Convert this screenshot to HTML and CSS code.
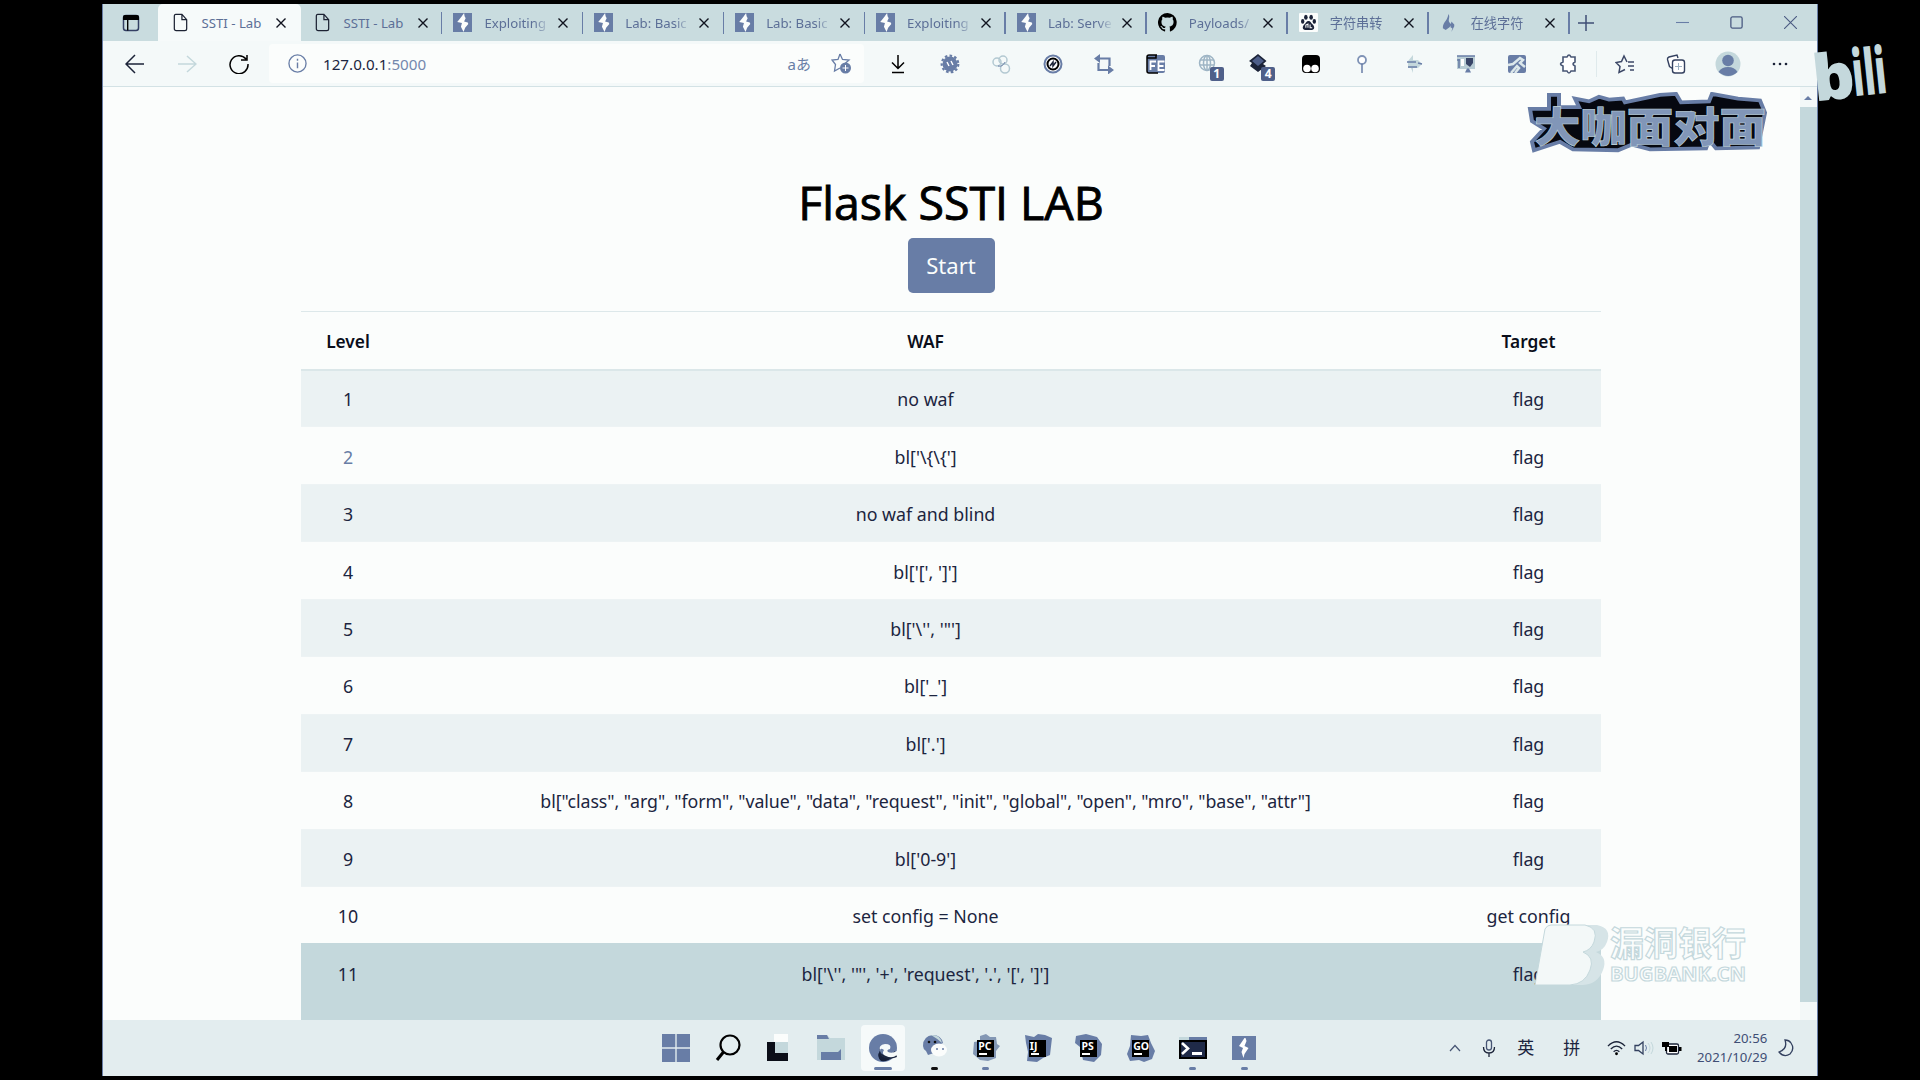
FILE: index.html
```html
<!DOCTYPE html>
<html lang="zh">
<head>
<meta charset="utf-8">
<title>SSTI - Lab</title>
<link rel="stylesheet" href="styles.css">
</head>
<body>
<svg class="defs" aria-hidden="true">
  <symbol id="close" viewBox="0 0 12 12"><path d="M1.500 1.500l9 9m0-9l-9 9" fill="none" stroke="#10131f" stroke-width="1.400"/></symbol>
  <symbol id="page" viewBox="0 0 16 20"><path d="M3 1.500h6.500l5 5.500v9.500q0 2-2 2h-9q-2 0-2-2v-13q0-2 1.500-2zM9.500 1.500v5.500h5" fill="none" stroke="#1c2233" stroke-width="1.300"/></symbol>
  <symbol id="bolt" viewBox="0 0 18 18"><path d="M0 0h18v18H0z" fill="#687da6"/><path d="M10.500 0L8 3.500l-4 5 4.500 1-1 3.500 2.500 5 1.500-4 3-3.500-.5-1.500-3.500-1L12 5l-1-2z" fill="#fbfdfc"/></symbol>
</svg>
<div class="window">
  <div class="tabs">
    <div class="workspace"><svg width="18" height="18" viewBox="0 0 18 18"><rect x="1.500" y="1.500" width="15" height="15" rx="2.500" fill="none" stroke="#344064" stroke-width="1.500"/><path d="M1 6V3q0-2 2-2h12q2 0 2 2v3zM5 6h1.400v10.500H5z" fill="#000"/></svg></div>
    <div class="tab active"><svg class="fav"><use href="#page"/></svg><span>SSTI - Lab</span><svg class="x"><use href="#close"/></svg></div>
    <div class="tab"><svg class="fav"><use href="#page"/></svg><span>SSTI - Lab</span><svg class="x"><use href="#close"/></svg></div>
    <div class="tab"><svg class="fav"><use href="#bolt"/></svg><span>Exploiting</span><svg class="x"><use href="#close"/></svg></div>
    <div class="tab"><svg class="fav"><use href="#bolt"/></svg><span>Lab: Basic</span><svg class="x"><use href="#close"/></svg></div>
    <div class="tab"><svg class="fav"><use href="#bolt"/></svg><span>Lab: Basic</span><svg class="x"><use href="#close"/></svg></div>
    <div class="tab"><svg class="fav"><use href="#bolt"/></svg><span>Exploiting</span><svg class="x"><use href="#close"/></svg></div>
    <div class="tab"><svg class="fav"><use href="#bolt"/></svg><span>Lab: Serve</span><svg class="x"><use href="#close"/></svg></div>
    <div class="tab"><svg class="fav" viewBox="0 0 16 16"><path d="M8 0a8 8 0 0 0-2.500 15.600c.4.100.5-.2.500-.4v-1.500c-2.200.5-2.700-1-2.700-1-.4-.9-.9-1.200-.9-1.200-.7-.5.100-.5.100-.5.800.1 1.200.8 1.200.8.7 1.300 1.900.9 2.300.7.1-.5.300-.9.500-1.100-1.800-.2-3.600-.9-3.600-4 0-.9.300-1.600.8-2.100-.1-.2-.4-1 .1-2.100 0 0 .7-.2 2.200.8a7.500 7.500 0 0 1 4 0c1.500-1 2.200-.8 2.200-.8.500 1.100.2 1.900.1 2.100.5.500.8 1.200.8 2.100 0 3.100-1.900 3.800-3.600 4 .3.200.5.700.5 1.500v2.200c0 .2.100.500.500.400A8 8 0 0 0 8 0z" fill="#000"/></svg><span>Payloads/</span><svg class="x"><use href="#close"/></svg></div>
    <div class="tab"><svg class="fav" viewBox="0 0 18 18"><rect width="18" height="18" rx="1" fill="#fbfdfc"/><g fill="#1b2338"><ellipse cx="6.500" cy="4" rx="1.700" ry="2.400"/><ellipse cx="11.500" cy="4" rx="1.700" ry="2.400"/><ellipse cx="3.500" cy="8" rx="1.600" ry="2.200"/><ellipse cx="14.500" cy="8" rx="1.600" ry="2.200"/><path d="M9 7.500c2 0 2.500 2 4 3.500 2 2 2 5-1 5H6c-3 0-3-3-1-5 1.500-1.500 2-3.500 4-3.500z"/></g><path d="M6.500 14v-2.500l2-1v3.500m2-3v3h2" fill="none" stroke="#fbfdfc"/></svg><span>字符串转</span><svg class="x"><use href="#close"/></svg></div>
    <div class="tab"><svg class="fav" viewBox="0 0 18 20"><path d="M8 1c2 4-1 6 1 9l2 2-2 3-4 3-3-2c0-7 4-6 6-15zM11 9l3 3v2l-3 6 1-4-2-1z" fill="#687da6"/></svg><span>在线字符</span><svg class="x"><use href="#close"/></svg></div>
    <div class="newtab"><svg width="16" height="16" viewBox="0 0 16 16"><path d="M8 0v16M0 8h16" stroke="#3f4e75" stroke-width="1.500"/></svg></div>
    <div class="controls">
      <svg viewBox="0 0 12 12"><path d="M0 6h12" stroke="#687da6"/></svg>
      <svg viewBox="0 0 12 12"><rect x=".8" y=".8" width="10.400" height="10.400" rx="1.500" fill="none" stroke="#4b5b82" stroke-width="1.200"/></svg>
      <svg viewBox="0 0 12 12"><path d="M0 0l12 12M12 0L0 12" stroke="#4b5b82"/></svg>
    </div>
  </div>

  <div class="toolbar">
    <div class="nav">
      <svg viewBox="0 0 20 20"><path d="M10 1L1 10l9 9M1 10h18" fill="none" stroke="#1b2338" stroke-width="1.500"/></svg>
      <svg viewBox="0 0 20 20"><path d="M10 2l9 8-9 8M1 10h18" fill="none" stroke="#c4d8dc" stroke-width="1.500"/></svg>
      <svg viewBox="0 0 20 20"><path d="M17 5a9 9 0 1 0 2 5M18 1v5h-6" fill="none" stroke="#000" stroke-width="1.500"/></svg>
    </div>
    <div class="address">
      <svg width="19" height="19" viewBox="0 0 20 20"><circle cx="10" cy="10" r="9" fill="none" stroke="#687da6" stroke-width="1.400"/><path d="M10 5v2m0 2v6" stroke="#687da6" stroke-width="1.500"/></svg>
      <p class="url">127.0.0.1<span>:5000</span></p>
      <span class="translate">aあ</span>
      <svg width="21" height="23" viewBox="0 0 21 21"><path d="M9 1l2.500 5.500 6.500.5-5 4.500M9 15l-5.500 3 1-6.500L1 7l6-.5L9 1" fill="none" stroke="#687da6" stroke-width="1.300"/><circle cx="14.500" cy="15" r="5.500" fill="#687da6"/><path d="M14.500 12v6m-3-3h6" stroke="#fff"/></svg>
    </div>
    <div class="exts">
      <svg viewBox="0 0 20 20"><path d="M10 1v13M4 8.500l6 6 6-6M4 18.500h12" fill="none" stroke="#000" stroke-width="1.500"/></svg>
      <svg viewBox="0 0 20 20"><circle cx="10" cy="10" r="7.500" fill="#687da6"/><circle cx="10" cy="10" r="8.300" fill="none" stroke="#687da6" stroke-width="2.200" stroke-dasharray="2.600 2.200"/><path d="M7 8l2 4m2-5l2 4" stroke="#fff" stroke-width="1.400"/></svg>
      <svg viewBox="0 0 20 20"><g fill="none" stroke="#b3c9d2" stroke-width="1.500"><circle cx="6" cy="8" r="4"/><circle cx="12" cy="6" r="4"/><circle cx="14" cy="14.500" r="4.500"/></g><path d="M7 12c4 1 6-2 7-4" fill="none" stroke="#687da6"/></svg>
      <svg viewBox="0 0 20 20"><circle cx="10" cy="10" r="8.500" fill="#fff" stroke="#687da6" stroke-width="2"/><circle cx="10" cy="10" r="5.500" fill="#fff" stroke="#000" stroke-width="2"/><path d="M7 12l3-4v4l3-4" fill="none" stroke="#1b2338" stroke-width="1.500"/></svg>
      <svg viewBox="0 0 20 20"><path d="M4.500 9v7H15M4 4.500h11.500V12" fill="none" stroke="#687da6" stroke-width="2.200"/><path d="M6 0v9L0 4.500zM14 11.500v9l6-4.500z" fill="#687da6"/></svg>
      <svg viewBox="0 0 20 20"><rect x="1" y="1" width="18" height="18" rx="2" fill="#687da6"/><path d="M11 1H3q-2 0-2 2v14q0 2 2 2h9M1 4h9V1" fill="none" stroke="#000" stroke-width="1.500"/><path d="M4.500 16V7.500H10M5 12h4M18.500 7.500h-6V16h6m-6-4h5" fill="none" stroke="#fff" stroke-width="1.800"/></svg>
      <div class="ext"><svg viewBox="0 0 20 20"><g fill="none" stroke="#9eb5c5" stroke-width="1.500"><circle cx="9" cy="9" r="7.500"/><ellipse cx="9" cy="9" rx="3.500" ry="7.500"/><path d="M2 6h14M2 11h14M9 1v16"/></g></svg><b class="badge">1</b></div>
      <div class="ext"><svg viewBox="0 0 20 20"><path d="M9 0l8.500 7L14 10l3 2-8 6-8-6 2-3-3-2z" fill="#1b2338"/><path d="M9 2l6 5-6 5-6-5z" fill="#4d5e89"/></svg><b class="badge">4</b></div>
      <svg viewBox="0 0 20 20"><rect x="1" y="1" width="18" height="18" rx="4" fill="#000"/><circle cx="6" cy="14.500" r="3.800" fill="#fff"/><circle cx="14" cy="14.500" r="3.800" fill="#fff"/></svg>
      <svg viewBox="0 0 20 20"><circle cx="10" cy="6" r="4" fill="#fff" stroke="#7f93b6" stroke-width="1.800"/><path d="M10 10v9" stroke="#687da6" stroke-width="1.500"/></svg>
      <svg viewBox="0 0 20 20"><path d="M4 7l5-6v5h5l4 4-4 4H9v5l-2-5H4z" fill="#c4d8dc"/><path d="M3 8h9M4 13h9M14 9l4 1" stroke="#687da6" stroke-width="1.300"/></svg>
      <svg viewBox="0 0 20 20"><path d="M1 2h18v13H1z" fill="#b9cdd5"/><path d="M1 2h18M1 6h3M3 5v9" stroke="#687da6" stroke-width="1.600"/><path d="M9 18.500h6l-2-4h-2z" fill="#687da6"/><path d="M10 4h7v5l-3 4-4-3z" fill="#394668"/><path d="M5 5h3v7H5z" fill="#fff"/></svg>
      <svg viewBox="0 0 20 20"><rect x="1" y="1" width="18" height="18" rx="2" fill="#687da6"/><path d="M1 11l5-1 7-6 3 2-3 3 5 4M4 19l6-7 2 2-4 5" fill="none" stroke="#dce8eb" stroke-width="2.500"/></svg>
      <svg viewBox="0 0 20 20"><path d="M8 3q2-4 4 0h4v5q-4 2 0 4v5h-4q-2 4-4 0H4v-5q-5-2 0-4V3z" fill="#fff" stroke="#475574" stroke-width="1.600"/></svg>
    </div>
    <div class="exts browser">
      <svg viewBox="0 0 20 20"><path d="M12 8l-3-6-2.500 5.500-5.500 1 4 4-1 6 6-3M13 8h6M13 12h6M15 16h4" fill="none" stroke="#3c4867" stroke-width="1.500"/></svg>
      <svg viewBox="0 0 20 20"><g fill="#fff" stroke="#33405f" stroke-width="1.400"><path d="M12 4l-1-3-8 2q-2 1-1.500 2.500l2 7 3 2"/><rect x="6.500" y="6" width="12" height="13" rx="2.500"/></g><path d="M12.500 9v7m-3.500-3.500h7" stroke="#9bb0c1"/></svg>
      <svg class="person" viewBox="0 0 26 26"><circle cx="13" cy="13" r="12.500" fill="#c4d8dc"/><circle cx="13" cy="9.500" r="5.800" fill="#687da6"/><path d="M3.500 21q3-5 9.500-5t9.500 5q-9 8-19 0z" fill="#687da6"/></svg>
      <svg viewBox="0 0 20 20"><g fill="#1b2338"><circle cx="4" cy="10" r="1.300"/><circle cx="10" cy="10" r="1.300"/><circle cx="16" cy="10" r="1.300"/></g></svg>
    </div>
  </div>

  <div class="view">
    <main>
      <h1>Flask SSTI LAB</h1>
      <button>Start</button>
      <table>
        <thead><tr><th class="c1">Level</th><th>WAF</th><th class="c3">Target</th></tr></thead>
        <tbody>
          <tr><td>1</td><td>no waf</td><td>flag</td></tr>
          <tr><td class="visited">2</td><td>bl['\{\{']</td><td>flag</td></tr>
          <tr><td>3</td><td>no waf and blind</td><td>flag</td></tr>
          <tr><td>4</td><td>bl['[', ']']</td><td>flag</td></tr>
          <tr><td>5</td><td>bl['\'', '"']</td><td>flag</td></tr>
          <tr><td>6</td><td>bl['_']</td><td>flag</td></tr>
          <tr><td>7</td><td>bl['.']</td><td>flag</td></tr>
          <tr><td>8</td><td class="long">bl["class", "arg", "form", "value", "data", "request", "init", "global", "open", "mro", "base", "attr"]</td><td>flag</td></tr>
          <tr><td>9</td><td>bl['0-9']</td><td>flag</td></tr>
          <tr><td>10</td><td>set config = None</td><td>get config</td></tr>
          <tr class="hover"><td>11</td><td>bl['\'', '"', '+', 'request', '.', '[', ']']</td><td>flag</td></tr>
        </tbody>
      </table>
    </main>
    <div class="scroll"><i></i></div>
  </div>

  <footer class="taskbar">
    <div class="apps">
      <div class="app"><svg viewBox="0 0 28 28"><path d="M0 0h13.300v13.300H0zM14.700 0H28v13.300H14.700zM0 14.700h13.300V28H0zM14.700 14.700H28V28H14.700z" fill="#687da6"/></svg></div>
      <div class="app"><svg viewBox="0 0 28 28"><circle cx="16" cy="11" r="9.500" fill="none" stroke="#000" stroke-width="2.200"/><path d="M9.500 18L3 26" stroke="#000" stroke-width="3"/></svg></div>
      <div class="app"><svg viewBox="0 0 28 28"><path d="M9 0h14v9H9z" fill="#fbfdfc"/><path d="M10 8h13v12H10z" fill="#c4d8dc"/><path d="M2 8h8v11h13v8H2z" fill="#0b0e18"/></svg></div>
      <div class="app"><svg viewBox="0 0 28 28"><path d="M0 1h10l3 3h15v22H0z" fill="#c4d8dc"/><path d="M0 1h10l2 4H0zM4 18h17l3-3v11H4z" fill="#687da6"/></svg></div>
      <div class="app on"><svg viewBox="0 0 28 28"><circle cx="14" cy="14" r="14" fill="#687da6"/><path d="M11 17q1 9 13 6-5 5-12 4-5-5-1-10z" fill="#16203a"/><path d="M12 12q-3 5 1 8 6 4 13-3l2 6-3 1q-7 2-11-1-6-5-2-11z" fill="#1b2740"/><path d="M11 17q-2-6 5-7 7 0 5 5-4 1-2 3 4 2 9-1v4q-5 4-11 1-5-2-2-6-4-3-4 1z" fill="#f6fafa"/></svg><i></i></div>
      <div class="app"><svg viewBox="0 0 28 28"><path d="M3 12Q3 2 13 1q8 0 10 8l-8 4-1 6-6 2-2-4q-3-2-3-5z" fill="#687da6"/><ellipse cx="19" cy="16" rx="8" ry="6.500" fill="#fbfdfc"/><path d="M11 1q9-1 11 8-4-4-11-8z" fill="#c4d8dc"/><g fill="#111"><circle cx="9" cy="8" r="1.300"/><circle cx="15" cy="8" r="1.300"/></g><g fill="#687da6"><circle cx="17" cy="15" r="1"/><circle cx="23" cy="15" r="1"/></g></svg><i class="dark"></i></div>
      <div class="app jb"><svg viewBox="0 0 28 28"><path d="M8 2l6-2 4 3 6 0 1 7 3 2-4 5 0 7-8 3-8-1-7-6 1-12 6-1z" fill="#8397b4"/><path d="M5 6h17v17H5z" fill="#000"/><path d="M7 19h8v2H7z" fill="#fff"/></svg><b>PC</b><i></i></div>
      <div class="app jb"><svg viewBox="0 0 28 28"><path d="M1 1l9 2 4-3 7 1 7 3-2 17-7 3-6 4-10-1 1-9-2-9z" fill="#687da6"/><path d="M5 6h17v17H5z" fill="#000"/><path d="M7 19h8v2H7z" fill="#fff"/></svg><b>IJ</b></div>
      <div class="app jb"><svg viewBox="0 0 28 28"><path d="M1 2l10-2 11 3 5 7-1 11-7 7-11-2-3-13-5-4z" fill="#687da6"/><path d="M5 6h17v17H5z" fill="#000"/><path d="M7 19h8v2H7z" fill="#fff"/></svg><b>PS</b></div>
      <div class="app jb"><svg viewBox="0 0 28 28"><path d="M4 1l10 1 7-1 3 8 4 8-3 8-8 3-5-2-9 1-3-7 3-8z" fill="#687da6"/><path d="M5 6h17v17H5z" fill="#000"/><path d="M7 19h8v2H7z" fill="#fff"/></svg><b>GO</b></div>
      <div class="app"><svg viewBox="0 0 28 28"><path d="M0 3h28v22H0z" fill="#000"/><path d="M0 3h10v3H0z" fill="#c4d8dc"/><path d="M10 3h18v3H10z" fill="#687da6"/><path d="M2 8h24v15H2z" fill="#1f2a48"/><path d="M3 9l6 5.500L3 20" fill="none" stroke="#fff" stroke-width="2.600"/><path d="M13 18h10v3H13z" fill="#fff"/></svg><i></i></div>
      <div class="app"><svg viewBox="0 0 28 28"><path d="M2 2h24v24H2z" fill="#687da6"/><path d="M14.500 4L9 12l4 2-1.500 4 2 6 1-4 4-6-4-2 2-5-1-3z" fill="#fff"/></svg><i></i></div>
    </div>
    <div class="tray">
      <svg class="t-up" viewBox="0 0 12 12"><path d="M1 9l5-5.500L11 9" fill="none" stroke="#475574" stroke-width="1.200"/></svg>
      <svg class="t-mic" viewBox="0 0 14 18"><rect x="4.500" y="1" width="5" height="10" rx="2.500" fill="none" stroke="#475574" stroke-width="1.300"/><path d="M1.500 8q0 6 5.500 6t5.500-6M7 14v4" fill="none" stroke="#1b2338" stroke-width="1.300"/></svg>
      <span class="ime a">英</span><span class="ime b">拼</span>
      <svg class="t-wifi" viewBox="0 0 20 16"><g fill="none" stroke="#1b2338" stroke-width="1.400"><path d="M1 6q9-9 18 0M4 9q6-6 12 0M7 12q3-3 6 0"/></g><circle cx="10" cy="14" r="1.500"/></svg>
      <svg class="t-vol" viewBox="0 0 20 16"><path d="M1 5.500h3.500L9 2v12l-4.500-3.500H1z" fill="none" stroke="#33405f" stroke-width="1.300"/><path d="M11.500 5q2 3 0 6" fill="none" stroke="#687da6"/><path d="M14 3q4 5 0 10M17 2q4 6 0 12" fill="none" stroke="#c4d8dc"/></svg>
      <svg class="t-bat" viewBox="0 0 20 16"><rect x="4.500" y="4" width="12" height="10" rx="1.500" fill="#fff" stroke="#1b2338" stroke-width="1.300"/><path d="M7 6h8v6H7zM17 7h2.500v4H17zM0 2h7v5H5v4H3V7H0z"/></svg>
      <div class="clock"><p>20:56</p><p>2021/10/29</p></div>
      <svg class="t-moon" viewBox="0 0 16 18"><path d="M7 1q3 9-6 12 5 6 11 2 5-5 1-11-2-3-6-3z" fill="none" stroke="#33405f" stroke-width="1.300"/></svg>
    </div>
  </footer>
</div>

<svg class="show-logo" viewBox="0 0 250 66" preserveAspectRatio="none">
  <path d="M3 18h19V3h10v13h20L48 7l14 3 10-5 10 3 14-1 2 4 35-8 16-1 5 9 28-1 3-8 26 5 22 2 5 13-6 31-1 6-42 1-7-9-3 9-56 1-18-5-14 6-45-1-13-8L7 62 5 53l12-14L5 31z" fill="#060810" stroke="#687da6" stroke-width="4"/>
  <text x="7" y="53" textLength="232" lengthAdjust="spacingAndGlyphs">大咖面对面</text>
</svg>

<svg class="video-logo" viewBox="0 0 80 76"><g transform="rotate(-6 35 60)"><text x="1" y="67" textLength="42" lengthAdjust="spacingAndGlyphs">b</text><text x="41" y="66" textLength="34" lengthAdjust="spacingAndGlyphs">ili</text></g></svg>

<svg class="bank-logo" viewBox="0 0 216 70">
  <path d="M13 5q2-4 6-4h38q15 3 10 17-3 8-11 10 12 5 7 18-5 14-20 15H4z" transform="translate(5 0)" fill="#d6e4e7"/>
  <path d="M10 5q2-4 6-4h34q14 3 9 17-3 8-11 10 12 5 7 18-5 14-20 15H0z" fill="#f3f8f8" stroke="#c4d8dc"/>
  <text class="cn" x="75" y="32" textLength="136" lengthAdjust="spacingAndGlyphs">漏洞银行</text>
  <text class="en" x="75" y="57" textLength="136" lengthAdjust="spacingAndGlyphs">BUGBANK.CN</text>
</svg>
</body>
</html>
```
FILE: styles.css
```css
* { box-sizing: border-box; }
body { margin: 0; width: 1920px; height: 1080px; overflow: hidden; background: #000; position: relative; font-family: "Noto Sans", "Open Sans", "Noto Sans CJK SC", sans-serif; color: #1c2540; }
p, h1 { margin: 0; }
.defs { position: absolute; width: 0; height: 0; }
.window { width: 1716px; height: 1072px; margin: 4px 0 0 102px; border-left: 1px solid #687da6; border-right: 1px solid #687da6; display: flex; flex-direction: column; background: #fbfdfc; }

.tabs { height: 37px; flex: none; display: flex; background: #c9dcdf; }
.workspace { width: 55px; display: flex; align-items: center; justify-content: center; }
.tab { width: 140.900px; flex: none; display: flex; align-items: center; padding-left: 12px; position: relative; font-size: 13.200px; color: #5c6f97; }
.tab::after { content: ""; position: absolute; right: -1px; top: 8px; height: 22px; width: 1.500px; background: #687da6; }
.tab.active { width: 142.500px; padding-left: 12.500px; background: #f6fafa; border-radius: 5px 5px 0 0; }
.tab.active::after { display: none; }
.fav { width: 19px; height: 19px; flex: none; }
.tab span { width: 66px; margin-left: 12px; white-space: nowrap; line-height: 22px; mask-image: linear-gradient(90deg, #000 75%, transparent 100%); }
.tab.active span, .tab.active + .tab span { mask-image: none; }
.x { width: 12px; height: 12px; margin-left: 7px; flex: none; }
.newtab { width: 34px; display: flex; align-items: center; justify-content: center; }
.controls { margin-left: auto; display: flex; align-items: center; gap: 41px; padding-right: 20px; }
.controls svg { width: 13px; height: 13px; }

.toolbar { height: 46px; flex: none; display: flex; align-items: center; background: #f4f9f9; border-bottom: 1px solid #d3e2e5; }
.nav { width: 166px; padding-left: 22px; display: flex; gap: 32px; }
.nav svg { width: 20px; height: 20px; }
.address { width: 595px; height: 39px; border-radius: 4px; background: #fbfdfc; display: flex; align-items: center; padding: 0 12px 0 19px; }
.url { margin-left: 16px; font-size: 15.200px; flex: 1; }
.url span { color: #7387ad; }
.translate { font-size: 15px; color: #687da6; margin-right: 20px; }
.exts { display: flex; align-items: center; gap: 31.600px; padding-left: 24px; }
.exts svg { width: 20px; height: 20px; flex: none; display: block; }
.ext { position: relative; }
.badge { position: absolute; left: 12px; top: 13px; width: 14px; height: 14px; border-radius: 2px; background: #4f608a; color: #fff; font-size: 12px; line-height: 14px; text-align: center; }
.browser { margin-left: 17px; padding-left: 18px; border-left: 1px solid #dfeaec; }
.exts .person { width: 26px; height: 26px; margin: 0 -3px; }

.view { height: 933px; flex: none; display: flex; }
main { width: 1300px; margin-left: 198px; padding-top: 79px; text-align: center; overflow: hidden; }
.scroll { width: 17px; margin-left: auto; padding: 20px 0 18px; background: #f3f8f8; position: relative; }
.scroll::before { content: ""; position: absolute; left: 4px; top: 9px; border: 4px solid transparent; border-top: 0; border-bottom: 4px solid #687da6; }
.scroll i { display: block; height: 100%; background: #c4d8dc; }
h1 { font: 500 46.500px/72px "Open Sans", "Noto Sans", sans-serif; color: #000; white-space: nowrap; -webkit-text-stroke: .9px #000; }
button { display: block; width: 87px; height: 55px; margin: 0 auto 18px; border: 0; border-radius: 5px; background: #687da6; color: #fbfdfc; font: 22px "Noto Sans", sans-serif; padding: 0 0 1px; }
table { width: 100%; table-layout: fixed; border-collapse: collapse; border-top: 1px solid #dde8ea; font-size: 17.800px; }
th, td { padding: 2px 0 0; height: 57.450px; }
th { height: 58px; font-weight: 600; border-bottom: 2px solid #dbe7e9; color: #0a0e1a; font-size: 17.300px; }
.c1 { width: 94px; }
.c3 { width: 145px; }
td { border-top: 1px solid #edf3f4; }
.long { letter-spacing: -.08px; }
tbody tr:nth-child(odd) { background: #ebf2f3; }
tbody tr.hover { background: #c4d8dc; }
.hover td { height: 76px; padding-bottom: 18px; border-color: #c4d8dc; }
.visited { color: #687da6; }

.taskbar { height: 56px; flex: none; display: flex; background: #e3edef; }
.apps { display: flex; padding-left: 547px; align-items: center; }
.app { position: relative; width: 51.700px; height: 56px; display: flex; align-items: center; justify-content: center; }
.app svg { width: 28px; height: 28px; }
.app.on { width: 44px; height: 46px; margin: 0 3.850px; border-radius: 4px; background: #f6fafa; }
.app i { position: absolute; bottom: 6px; width: 7px; height: 3px; border-radius: 1.500px; background: #687da6; }
.app.on i { width: 18px; bottom: 1px; }
.app i.dark { background: #111; }
.jb b { position: absolute; left: 18px; top: 19px; color: #fff; font-size: 10.500px; line-height: 14px; }
.tray { flex: 1; display: flex; align-items: center; padding-left: 179px; }
.t-up { width: 12px; height: 12px; }
.t-mic { width: 14px; height: 18px; margin-left: 21px; }
.ime { font-size: 17px; line-height: 22px; }
.ime.a { margin-left: 21px; }
.ime.b { margin-left: 29px; }
.t-wifi { width: 19px; height: 16px; margin-left: 27px; }
.t-vol { width: 20px; height: 16px; margin-left: 8px; }
.t-bat { width: 20px; height: 16px; margin-left: 8px; }
.clock { width: 78px; margin-left: 7px; text-align: right; font-size: 13.200px; line-height: 19px; color: #3f4e75; white-space: nowrap; display: flex; flex-direction: column; align-items: flex-end; }
.t-moon { width: 16px; height: 18px; margin-left: 11px; }

.show-logo { position: absolute; left: 1527px; top: 92px; width: 250px; height: 62px; }
.show-logo text { font: 900 44px "Noto Sans CJK SC", sans-serif; fill: #8196b8; stroke: #c4d8dc; stroke-width: .6px; }
.video-logo { position: absolute; left: 1813px; top: 31px; width: 80px; height: 76px; }
.video-logo text { font: 800 64px "Open Sans", sans-serif; fill: #c4d8dc; }
.bank-logo { position: absolute; left: 1535px; top: 924px; width: 216px; height: 70px; }
.bank-logo text { fill: #fbfdfc; stroke: #c4d8dc; stroke-width: 1.200px; }
.bank-logo .cn { font: 700 34px "Noto Sans CJK SC", sans-serif; }
.bank-logo .en { font: 700 20px "Open Sans", sans-serif; }
```
